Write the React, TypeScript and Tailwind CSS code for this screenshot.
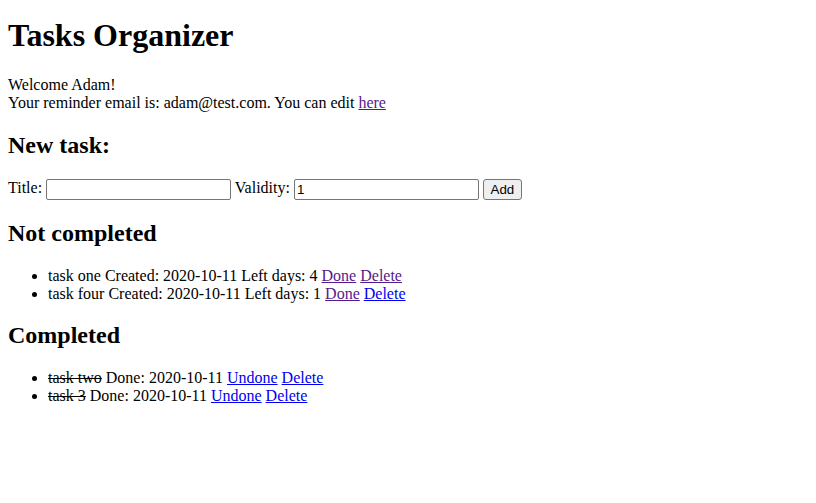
import React from "react";

const visited = "text-[#551a8b] underline";
const link = "text-[#0000ee] underline";

const App = () => {
  return (
    <div className="min-h-screen bg-white px-[8px] pb-[8px] font-['Liberation_Serif',serif] text-[16px] leading-[normal] text-black">
      <h1 className="mt-[17.44px] mb-[21.44px] text-[32px] font-bold leading-[normal]">Tasks Organizer</h1>

      <div>
        Welcome Adam!
        <br />
        Your reminder email is: adam@test.com. You can edit{" "}
        <a href="#" className={visited}>
          here
        </a>
      </div>

      <h2 className="my-[19.92px] text-[24px] font-bold leading-[normal]">New task:</h2>

      <form onSubmit={(e) => e.preventDefault()}>
        <label>Title: </label>
        <input
          type="text"
          className="h-[21px] w-[185px] rounded-[2px] border border-[#767676] px-[2px] align-middle font-['Liberation_Sans',sans-serif] text-[13.33px]"
        />{" "}
        <label>Validity: </label>
        <input
          type="text"
          defaultValue="1"
          className="h-[21px] w-[185px] rounded-[2px] border border-[#767676] px-[2px] align-middle font-['Liberation_Sans',sans-serif] text-[13.33px]"
        />{" "}
        <button
          type="submit"
          className="h-[21px] w-[39px] rounded-[3px] border border-[#767676] bg-[#efefef] px-[6px] align-middle font-['Liberation_Sans',sans-serif] text-[13.33px]"
        >
          Add
        </button>
      </form>

      <h2 className="my-[19.92px] text-[24px] font-bold leading-[normal]">Not completed</h2>
      <ul className="my-[16px] list-disc pl-[40px]">
        <li>
          task one Created: 2020-10-11 Left days: 4{" "}
          <a href="#" className={visited}>Done</a>{" "}
          <a href="#" className={visited}>Delete</a>
        </li>
        <li>
          task four Created: 2020-10-11 Left days: 1{" "}
          <a href="#" className={visited}>Done</a>{" "}
          <a href="#" className={link}>Delete</a>
        </li>
      </ul>

      <h2 className="my-[19.92px] text-[24px] font-bold leading-[normal]">Completed</h2>
      <ul className="my-[16px] list-disc pl-[40px]">
        <li>
          <span className="line-through">task two</span> Done: 2020-10-11{" "}
          <a href="#" className={link}>Undone</a>{" "}
          <a href="#" className={link}>Delete</a>
        </li>
        <li>
          <span className="line-through">task 3</span> Done: 2020-10-11{" "}
          <a href="#" className={link}>Undone</a>{" "}
          <a href="#" className={link}>Delete</a>
        </li>
      </ul>
    </div>
  );
};

export default App;
